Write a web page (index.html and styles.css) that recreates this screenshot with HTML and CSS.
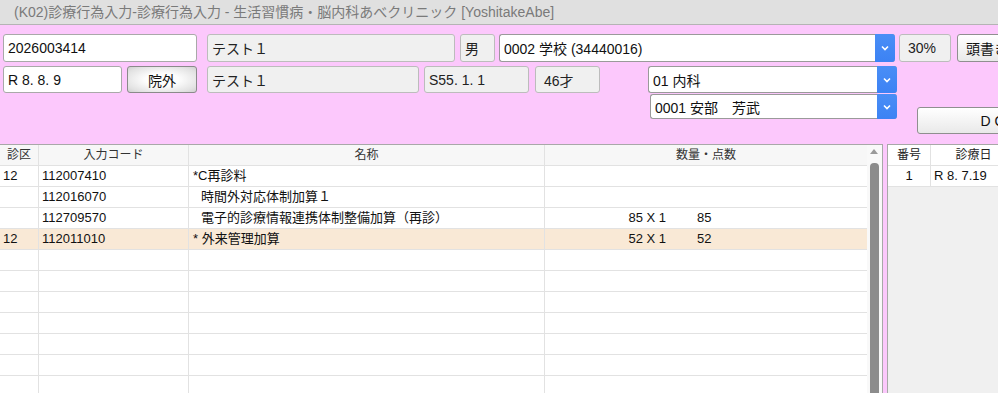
FILE: index.html
```html
<!DOCTYPE html>
<html lang="ja">
<head>
<meta charset="utf-8">
<title>診療行為入力</title>
<link rel="stylesheet" href="styles.css">
</head>
<body>
<div class="app">
  <div class="titlebar">(K02)診療行為入力-診療行為入力 - 生活習慣病・脳内科あべクリニック [YoshitakeAbe]</div>
  <div class="form">
    <div class="row1">
      <div class="fld in w-id">2026003414</div>
      <div class="fld ro w-name ml10">テスト１</div>
      <div class="fld ro w-sex ml5">男</div>
      <div class="sel w-ins ml4"><span class="txt">0002 学校 (34440016)</span><span class="arr"><svg width="8" height="6" viewBox="0 0 8 6"><polyline points="1,1.5 4,4.5 7,1.5" fill="none" stroke="#fff" stroke-width="1.6"/></svg></span></div>
      <div class="fld ro w-pct ml4 pad8">30%</div>
      <button class="btn w-head ml6">頭書き</button>
    </div>
    <div class="row2">
      <div class="fld in w-date">R 8. 8. 9</div>
      <button class="btn btn-out w-out ml5">院外</button>
      <div class="fld ro w-kana ml10">テスト１</div>
      <div class="fld ro w-birth ml5">S55. 1. 1</div>
      <div class="fld ro w-age ml6 pad8">46才</div>
      <div class="selcol">
        <div class="sel w-dept"><span class="txt">01 内科</span><span class="arr"><svg width="8" height="6" viewBox="0 0 8 6"><polyline points="1,1.5 4,4.5 7,1.5" fill="none" stroke="#fff" stroke-width="1.6"/></svg></span></div>
        <div class="sel w-doc"><span class="txt">0001 安部　芳武</span><span class="arr"><svg width="8" height="6" viewBox="0 0 8 6"><polyline points="1,1.5 4,4.5 7,1.5" fill="none" stroke="#fff" stroke-width="1.6"/></svg></span></div>
      </div>
      <button class="btn btn-do">D O</button>
    </div>
  </div>
  <div class="main">
    <div class="left">
      <div class="grid">
        <div class="trow thead">
          <div class="c c-center">診区</div>
          <div class="c c-center">入力コード</div>
          <div class="c c-center">名称</div>
          <div class="c c-center">数量・点数</div>
        </div>
        <div class="trow">
          <div class="c">12</div><div class="c">112007410</div><div class="c">*C再診料</div><div class="c"></div>
        </div>
        <div class="trow">
          <div class="c"></div><div class="c">112016070</div><div class="c sub">時間外対応体制加算１</div><div class="c"></div>
        </div>
        <div class="trow">
          <div class="c"></div><div class="c">112709570</div><div class="c sub">電子的診療情報連携体制整備加算（再診）</div><div class="c"><span class="qty">85 X 1</span><span class="pt">85</span></div>
        </div>
        <div class="trow sel-row">
          <div class="c">12</div><div class="c">112011010</div><div class="c">* 外来管理加算</div><div class="c"><span class="qty">52 X 1</span><span class="pt">52</span></div>
        </div>
        <div class="trow"><div class="c"></div><div class="c"></div><div class="c"></div><div class="c"></div></div>
        <div class="trow"><div class="c"></div><div class="c"></div><div class="c"></div><div class="c"></div></div>
        <div class="trow"><div class="c"></div><div class="c"></div><div class="c"></div><div class="c"></div></div>
        <div class="trow"><div class="c"></div><div class="c"></div><div class="c"></div><div class="c"></div></div>
        <div class="trow"><div class="c"></div><div class="c"></div><div class="c"></div><div class="c"></div></div>
        <div class="trow"><div class="c"></div><div class="c"></div><div class="c"></div><div class="c"></div></div>
        <div class="trow"><div class="c"></div><div class="c"></div><div class="c"></div><div class="c"></div></div>
      </div>
      <div class="vscroll">
        <div class="up"></div>
        <div class="thumb"></div>
      </div>
    </div>
    <div class="right">
      <div class="rrow rhead">
        <div class="c c-center">番号</div>
        <div class="c c-center">診療日</div>
        <div class="c"></div>
      </div>
      <div class="rrow">
        <div class="c c-center">1</div>
        <div class="c">R 8. 7.19</div>
        <div class="c"></div>
      </div>
    </div>
  </div>
</div>
</body>
</html>
```
FILE: styles.css
```css
html, body {
  margin: 0;
  padding: 0;
  overflow: hidden;
}

.app {
  width: 998px;
  height: 393px;
  overflow: hidden;
  font-family: "Liberation Sans", "Noto Sans CJK JP", sans-serif;
  color: #111;
}

.titlebar {
  height: 24px;
  line-height: 24px;
  border-bottom: 1px solid #b4b4b4;
  background: #e0e0e0;
  color: #7a7a7a;
  font-size: 14px;
  padding-left: 14px;
  white-space: nowrap;
}

.form {
  height: 119px;
  box-sizing: border-box;
  padding: 9px 0 0 3px;
  background: #fcc8fc;
  white-space: nowrap;
}

.row1 {
  display: flex;
  height: 28px;
  margin-bottom: 4px;
}

.row2 {
  display: flex;
  align-items: flex-start;
}

.row2 > .fld,
.row2 > .btn-out {
  height: 27px;
}

.fld {
  box-sizing: border-box;
  height: 100%;
  display: flex;
  align-items: center;
  padding-left: 4px;
  border: 1px solid #aaa;
  border-radius: 3px;
  font-size: 14px;
  flex: none;
  white-space: nowrap;
  overflow: hidden;
}

.fld.in {
  background: #fff;
  border-color: #a9a9a9;
  color: #111;
}

.fld.ro {
  background: #f0f0f0;
  border-color: #bcbcbc;
  color: #222;
}

.pad8 { padding-left: 8px; }

.ml4 { margin-left: 4px; }
.ml5 { margin-left: 5px; }
.ml6 { margin-left: 6px; }
.ml10 { margin-left: 10px; }

.w-id { width: 194px; }
.w-name { width: 248px; }
.w-sex { width: 35px; }
.w-ins { width: 396px; height: 28px; }
.w-pct { width: 52px; }
.w-head { width: 60px; height: 28px; }

.w-date { width: 119px; }
.w-out { width: 70px; }
.w-kana { width: 212px; }
.w-birth { width: 105px; }
.w-age { width: 65px; }

.selcol {
  margin-left: 48px;
  display: flex;
  flex-direction: column;
  flex: none;
}

.w-dept { width: 249px; height: 27px; }
.w-doc { width: 247px; height: 25px; margin-left: 2px; margin-top: 1px; }

.sel {
  box-sizing: border-box;
  display: flex;
  flex: none;
  border: 1px solid #9a9a9a;
  border-right: none;
  border-radius: 3px;
  background: #fff;
  font-size: 14px;
}

.sel .txt {
  flex: 1;
  display: flex;
  align-items: center;
  padding-left: 4px;
  color: #111;
  overflow: hidden;
}

.sel .arr {
  width: 20px;
  margin: -1px 0;
  background: linear-gradient(#4a8ef6, #3c82f4);
  border-radius: 0 3px 3px 0;
  display: flex;
  align-items: center;
  justify-content: center;
}

.btn {
  box-sizing: border-box;
  flex: none;
  border: 1px solid #8f8f8f;
  border-radius: 3px;
  background: linear-gradient(#ffffff, #e9e9e9);
  font-family: "Liberation Sans", "Noto Sans CJK JP", sans-serif;
  font-size: 14px;
  color: #111;
  padding: 0;
  white-space: nowrap;
}

.btn-out {
  border-color: #8a8a8a;
  background: radial-gradient(ellipse at center, #fdfdfd 35%, #e2e2e2 80%, #cfcfcf 100%);
}

.btn-do {
  width: 152px;
  height: 27px;
  margin-left: 20px;
  margin-top: 41px;
}

.main {
  display: flex;
  gap: 4px;
  height: 249px;
  background: #fcc8fc;
}

.left {
  width: 883px;
  flex: none;
  box-sizing: border-box;
  border-top: 1px solid #a8a8a8;
  border-right: 1px solid #a8a8a8;
  background: #fff;
  display: flex;
  overflow: hidden;
}

.grid {
  width: 867px;
  flex: none;
}

.trow {
  display: grid;
  grid-template-columns: 39px 150px 356px 1fr;
  height: 21px;
  box-sizing: border-box;
  border-bottom: 1px solid #e2e2e2;
  font-size: 13px;
  line-height: 20px;
  background: #fff;
}

.trow.thead {
  background: #f7f7f7;
  font-size: 12px;
  color: #333;
}

.trow.sel-row {
  background: #f9e9d6;
}

.c {
  box-sizing: border-box;
  border-right: 1px solid #e2e2e2;
  padding-left: 3px;
  white-space: pre;
  overflow: hidden;
}

.trow .c:nth-child(3) {
  padding-left: 4px;
}

.trow .c.sub {
  padding-left: 12px;
}

.trow .c:last-child {
  border-right: none;
}

.c-center {
  text-align: center;
  padding-left: 0;
}

.trow .c.c-center {
  padding-left: 0;
}

.qty {
  display: inline-block;
  width: 118px;
  text-align: right;
}

.pt {
  margin-left: 31px;
}

.vscroll {
  width: 15px;
  flex: none;
  background: #f9f9f9;
}

.up {
  width: 0;
  height: 0;
  margin: 4px 0 0 3px;
  border-left: 4.5px solid transparent;
  border-right: 4.5px solid transparent;
  border-bottom: 5px solid #9a9a9a;
}

.thumb {
  width: 9px;
  height: 300px;
  margin: 9px 0 0 3px;
  background: #8c8c8c;
  border-radius: 4px 4px 0 0;
}

.right {
  flex: 1;
  box-sizing: border-box;
  border-top: 1px solid #a8a8a8;
  border-left: 1px solid #a8a8a8;
  background: #f0f0f0;
  overflow: hidden;
}

.rrow {
  display: grid;
  grid-template-columns: 43px 86px 1fr;
  height: 21px;
  box-sizing: border-box;
  border-bottom: 1px solid #e2e2e2;
  background: #fff;
  font-size: 13px;
  line-height: 20px;
}

.rrow.rhead {
  font-size: 12px;
  color: #222;
}
```
